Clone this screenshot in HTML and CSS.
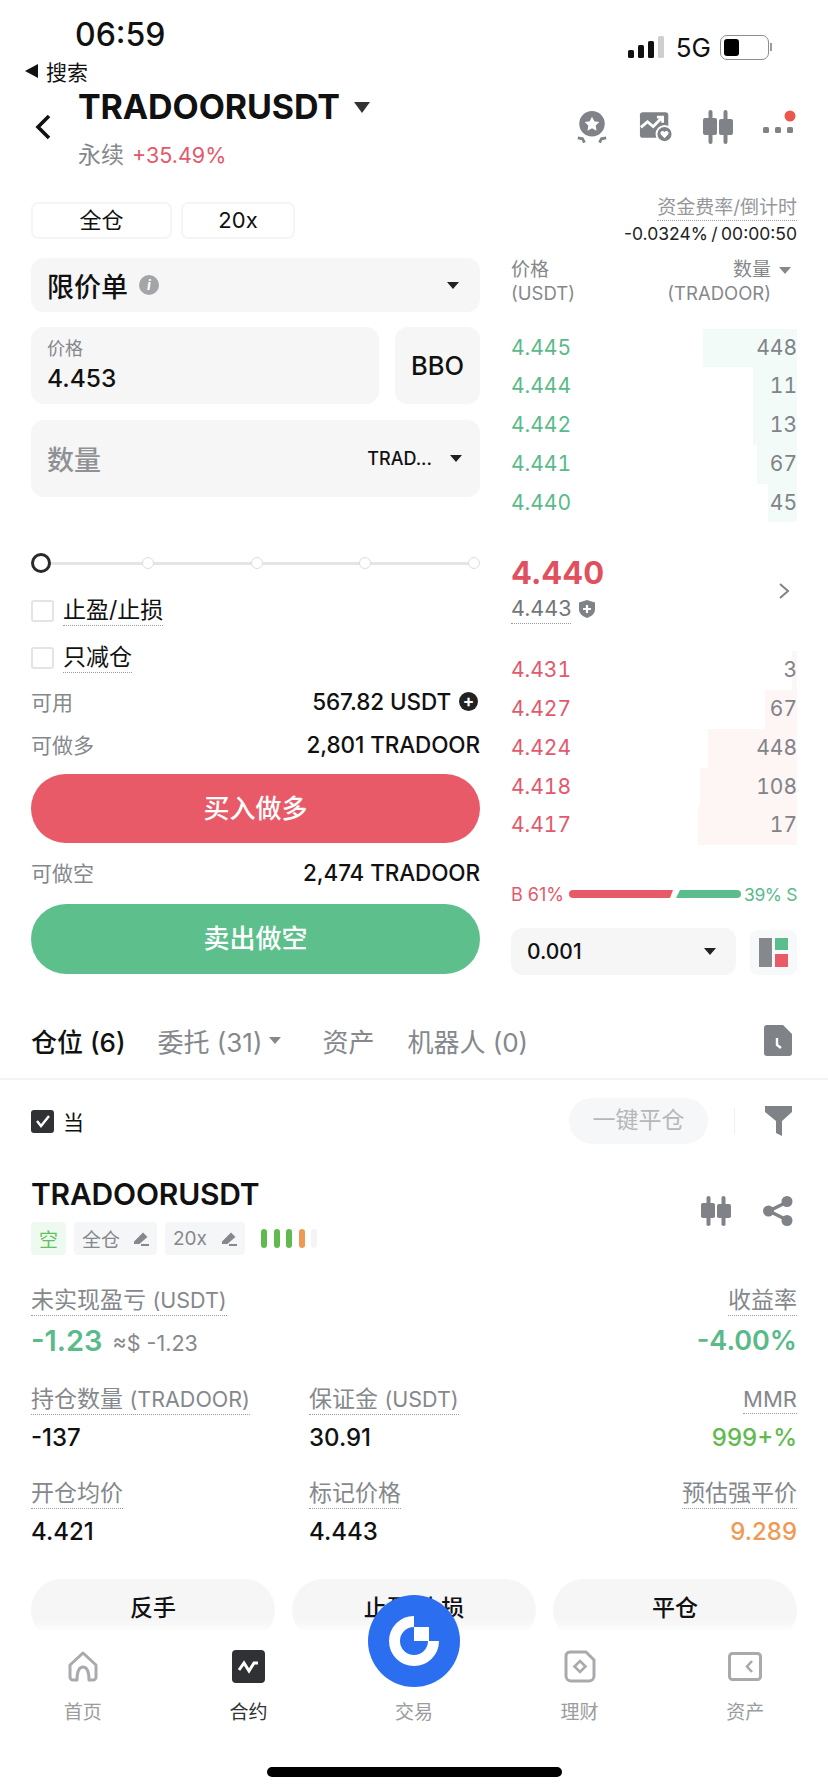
FILE: index.html
```html
<!DOCTYPE html>
<html lang="zh-CN">
<head>
  <meta charset="UTF-8" />
  <title>TRADOORUSDT 永续</title>
  <link rel="stylesheet" href="styles.css">
</head>
<body>
<div class="page">

  <div class="status">
    <div class="time">06:59</div>
    <div class="status-right">
      <svg class="signal" width="37" height="23" viewBox="0 0 37 23">
        <rect x="0" y="14" width="6" height="8" rx="1.5" fill="#111"/>
        <rect x="10" y="9" width="6" height="13" rx="1.5" fill="#111"/>
        <rect x="20" y="5" width="6" height="17" rx="1.5" fill="#111"/>
        <rect x="30" y="0" width="6" height="22" rx="1.5" fill="#cfcfcf"/>
      </svg>
      <span class="net">5G</span>
      <span class="battery"><span class="battery-fill"></span></span>
      <span class="battery-tip"></span>
    </div>
  </div>
  <div class="back-app"><span class="back-tri"></span>搜索</div>

  <div class="header">
    <svg class="back" width="20" height="28" viewBox="0 0 20 28"><path d="M16 3 L5 14 L16 25" fill="none" stroke="#111" stroke-width="3.6"/></svg>
    <div class="title-block">
      <div class="title">TRADOORUSDT<span class="title-arrow"></span></div>
      <div class="subtitle">永续<span class="change">+35.49%</span></div>
    </div>
    <div class="header-icons">
      <svg width="34" height="35" viewBox="0 0 36 36">
        <circle cx="18" cy="14" r="13.5" fill="#7f8286"/>
        <path d="M18 6.500l2.400 4.900 5.400.8-3.900 3.800.9 5.400-4.800-2.500-4.800 2.500.9-5.400-3.900-3.800 5.400-.8z" fill="#fff"/>
        <path d="M3 29l5 1 2 4M33 29l-5 1-2 4" fill="none" stroke="#7f8286" stroke-width="3"/>
      </svg>
      <svg width="34" height="33" viewBox="0 0 36 34">
        <rect x="1" y="2" width="30" height="27" rx="3" fill="#7f8286"/>
        <path d="M2 18l7-6 6 5 9-9M19 7h6v6" fill="none" stroke="#fff" stroke-width="3"/>
        <circle cx="27" cy="25" r="8.500" fill="#7f8286" stroke="#fff" stroke-width="2"/>
        <path d="M27 29.500l-4-4.200a2.300 2.300 0 0 1 4-2.300 2.300 2.300 0 0 1 4 2.300z" fill="#fff"/>
      </svg>
      <svg width="30" height="34" viewBox="0 0 30 34">
        <use href="#candles"/>
      </svg>
      <svg width="34" height="34" viewBox="0 0 34 34">
        <rect x="0" y="17" width="6" height="6" rx="1.500" fill="#7f8286"/>
        <rect x="12" y="17" width="6" height="6" rx="1.500" fill="#7f8286"/>
        <rect x="24" y="17" width="6" height="6" rx="1.500" fill="#7f8286"/>
        <circle cx="27" cy="6" r="5.500" fill="#e8584d"/>
      </svg>
    </div>
  </div>

  <svg class="defs" width="0" height="0">
    <symbol id="candles" viewBox="0 0 30 34">
      <rect x="5.500" y="0" width="4" height="34" rx="2" fill="#7f8286"/>
      <rect x="0" y="8" width="14" height="17" rx="2" fill="#7f8286"/>
      <rect x="20.500" y="0" width="4" height="34" rx="2" fill="#7f8286"/>
      <rect x="16" y="9" width="14" height="16" rx="2" fill="#7f8286"/>
    </symbol>
    <symbol id="pencil" viewBox="0 0 16 14">
      <path d="M2 10L10 2l3 3-7 6H2z" fill="#85888c" stroke="#85888c" stroke-width="2"/>
      <path d="M8 13h8" stroke="#85888c" stroke-width="2"/>
    </symbol>
  </svg>

  <div class="margin-row">
    <div class="margin-btns">
      <div class="margin-btn cross">全仓</div>
      <div class="margin-btn lever">20x</div>
    </div>
    <div class="funding">
      <div><span class="dotted">资金费率/倒计时</span></div>
      <div class="funding-val">-0.0324% / 00:00:50</div>
    </div>
  </div>

  <div class="trade">
    <div class="form">
      <div class="select-type">
        <span class="select-name">限价单</span>
        <span class="info">i</span>
        <span class="caret caret-end"></span>
      </div>
      <div class="price-row">
        <div class="price-field">
          <div class="field-label">价格</div>
          <div class="field-value">4.453</div>
        </div>
        <div class="bbo">BBO</div>
      </div>
      <div class="qty-field">
        <span class="qty-label">数量</span>
        <span class="qty-unit">TRAD...</span>
        <span class="caret"></span>
      </div>
      <div class="slider">
        <span class="knob"></span>
        <span class="dot"></span>
        <span class="dot"></span>
        <span class="dot"></span>
        <span class="dot"></span>
      </div>
      <div class="check-row first"><span class="box"></span><span class="dotted">止盈/止损</span></div>
      <div class="check-row second"><span class="box"></span><span class="dotted">只减仓</span></div>
      <div class="kv avail">
        <span class="kv-key">可用</span>
        <span class="kv-val">567.82 USDT<span class="plus">+</span></span>
      </div>
      <div class="kv long-max">
        <span class="kv-key">可做多</span>
        <span class="kv-val">2,801 TRADOOR</span>
      </div>
      <div class="action buy">买入做多</div>
      <div class="kv short-max">
        <span class="kv-key">可做空</span>
        <span class="kv-val">2,474 TRADOOR</span>
      </div>
      <div class="action sell">卖出做空</div>
    </div>

    <div class="book">
      <div class="book-head">
        <div>
          <div class="head-top">价格</div>
          <div class="head-sub">(USDT)</div>
        </div>
        <div class="head-right">
          <div class="head-top">数量</div>
          <div class="head-sub">(TRADOOR)</div>
          <span class="head-caret"></span>
        </div>
      </div>
      <div class="levels">
        <div class="level up"><span class="depth" style="width:94px"></span><span>4.445</span><span class="qty">448</span></div>
        <div class="level up"><span class="depth" style="width:44px"></span><span>4.444</span><span class="qty">11</span></div>
        <div class="level up"><span class="depth" style="width:44px"></span><span>4.442</span><span class="qty">13</span></div>
        <div class="level up"><span class="depth" style="width:40px"></span><span>4.441</span><span class="qty">67</span></div>
        <div class="level up"><span class="depth" style="width:29px"></span><span>4.440</span><span class="qty">45</span></div>
      </div>
      <div class="mid">
        <div>
          <div class="mid-price">4.440</div>
          <div class="mark-row">
            <span class="mark dotted">4.443</span>
            <svg width="18" height="20" viewBox="0 0 18 20">
              <path d="M9 1l8 2.500v7c0 4-3.500 7-8 8.500-4.500-1.500-8-4.500-8-8.500v-7z" fill="#7f8286"/>
              <path d="M9 6v8M5 10h8" stroke="#fff" stroke-width="2.200"/>
            </svg>
          </div>
        </div>
        <svg class="mid-chev" width="12" height="18" viewBox="0 0 12 18"><path d="M2 2l8 7-8 7" fill="none" stroke="#7f8286" stroke-width="2"/></svg>
      </div>
      <div class="levels">
        <div class="level down"><span class="depth" style="width:5px"></span><span>4.431</span><span class="qty">3</span></div>
        <div class="level down"><span class="depth" style="width:32px"></span><span>4.427</span><span class="qty">67</span></div>
        <div class="level down"><span class="depth" style="width:89px"></span><span>4.424</span><span class="qty">448</span></div>
        <div class="level down"><span class="depth" style="width:97px"></span><span>4.418</span><span class="qty">108</span></div>
        <div class="level down"><span class="depth" style="width:99px"></span><span>4.417</span><span class="qty">17</span></div>
      </div>
      <div class="ratio">
        <span class="ratio-b">B 61%</span>
        <svg width="172" height="8" viewBox="0 0 172 8">
          <path d="M4 0H104L101 8H4a4 4 0 0 1 0-8z" fill="#e85a67"/>
          <path d="M111 0H168a4 4 0 0 1 0 8H107z" fill="#5bbd8d"/>
        </svg>
        <span class="ratio-s">39% S</span>
      </div>
      <div class="book-foot">
        <div class="tick"><span>0.001</span><span class="caret"></span></div>
        <div class="layout-btn">
          <svg width="30" height="30" viewBox="0 0 30 30">
            <rect x="0" y="0" width="13" height="29" fill="#85888c"/>
            <rect x="16" y="0" width="13" height="12" fill="#5bbd8d"/>
            <rect x="16" y="16" width="13" height="13" fill="#e85a67"/>
          </svg>
        </div>
      </div>
    </div>
  </div>

  <div class="tabs">
    <span class="tab active">仓位 (6)</span>
    <span class="tab orders">委托 (31)<span class="tab-caret"></span></span>
    <span class="tab assets">资产</span>
    <span class="tab bots">机器人 (0)</span>
    <svg class="tab-file" width="28" height="31" viewBox="0 0 28 31">
      <path d="M3 0H19L28 9V28a3 3 0 0 1-3 3H3a3 3 0 0 1-3-3V3a3 3 0 0 1 3-3z" fill="#7f8286"/>
      <path d="M13 13v7l4 3" fill="none" stroke="#fff" stroke-width="2.400"/>
    </svg>
  </div>

  <div class="filter-row">
    <span class="box-checked">
      <svg width="16" height="14" viewBox="0 0 16 14"><path d="M2 7l4 5 8-10" fill="none" stroke="#fff" stroke-width="2.400"/></svg>
    </span>
    <span class="filter-name">当</span>
    <span class="close-all">一键平仓</span>
    <span class="filter-sep"></span>
    <svg class="filter-icon" width="27" height="30" viewBox="0 0 27 30">
      <path d="M0 0H27V6L17 15V30L11 27V15L0 6z" fill="#7f8286"/>
    </svg>
  </div>

  <div class="pos-head">
    <div>
      <div class="pos-title">TRADOORUSDT</div>
      <div class="tags">
        <span class="tag short">空</span>
        <span class="tag tag-cross">全仓<svg width="16" height="14"><use href="#pencil"/></svg></span>
        <span class="tag tag-lever">20x<svg width="16" height="14"><use href="#pencil"/></svg></span>
        <span class="risk">
          <i class="g"></i><i class="g"></i><i class="g"></i><i class="o"></i><i class="e"></i>
        </span>
      </div>
    </div>
    <div class="pos-icons">
      <svg width="30" height="30" viewBox="0 0 30 34" preserveAspectRatio="none"><use href="#candles"/></svg>
      <svg width="30" height="30" viewBox="0 0 30 30">
        <path d="M24 6L6 15l18 9" fill="none" stroke="#7f8286" stroke-width="3.400"/>
        <circle cx="24" cy="5.500" r="5.500" fill="#7f8286"/>
        <circle cx="5.500" cy="15" r="5.500" fill="#7f8286"/>
        <circle cx="24" cy="24.500" r="5.500" fill="#7f8286"/>
      </svg>
    </div>
  </div>

  <div class="pnl">
    <div>
      <div class="stat-label"><span class="dotted">未实现盈亏 <span class="unit">(USDT)</span></span></div>
      <div class="pnl-val"><b>-1.23</b><span class="approx">≈$ -1.23</span></div>
    </div>
    <div class="right">
      <div class="stat-label"><span class="dotted">收益率</span></div>
      <div class="pnl-val"><b class="roe">-4.00%</b></div>
    </div>
  </div>
  <div class="stats">
    <div>
      <div class="stat-label"><span class="dotted">持仓数量 <span class="unit">(TRADOOR)</span></span></div>
      <div class="stat-val">-137</div>
    </div>
    <div>
      <div class="stat-label"><span class="dotted">保证金 <span class="unit">(USDT)</span></span></div>
      <div class="stat-val">30.91</div>
    </div>
    <div class="right">
      <div class="stat-label"><span class="dotted mmr-label">MMR</span></div>
      <div class="stat-val mmr">999+%</div>
    </div>
    <div>
      <div class="stat-label"><span class="dotted">开仓均价</span></div>
      <div class="stat-val">4.421</div>
    </div>
    <div>
      <div class="stat-label"><span class="dotted">标记价格</span></div>
      <div class="stat-val">4.443</div>
    </div>
    <div class="right">
      <div class="stat-label"><span class="dotted">预估强平价</span></div>
      <div class="stat-val liq">9.289</div>
    </div>
  </div>
  <div class="pos-actions">
    <div class="pos-btn">反手</div>
    <div class="pos-btn">止盈/止损</div>
    <div class="pos-btn">平仓</div>
  </div>

  <nav class="tabbar">
    <div class="nav-item">
      <svg width="32" height="31" viewBox="0 0 32 31">
        <path d="M16 2L29 14V26a3 3 0 0 1-3 3H22C22 22 21 16 16 16S10 22 10 29H6a3 3 0 0 1-3-3V14z" fill="none" stroke="#a8aaad" stroke-width="3" stroke-linejoin="round"/>
      </svg>
      <span>首页</span>
    </div>
    <div class="nav-item active">
      <svg width="33" height="33" viewBox="0 0 33 33">
        <rect width="33" height="33" rx="4" fill="#2f3134"/>
        <path d="M7 20L12 13L17 21L22 13H26" fill="none" stroke="#fff" stroke-width="3"/>
      </svg>
      <span>合约</span>
    </div>
    <div class="nav-item">
      <svg width="34" height="33" viewBox="0 0 34 33"></svg>
      <span>交易</span>
    </div>
    <div class="nav-item">
      <svg width="32" height="33" viewBox="0 0 32 33">
        <path d="M6 2H22L30 10V26a5 5 0 0 1-5 5H7a5 5 0 0 1-5-5V6a4 4 0 0 1 4-4z" fill="none" stroke="#a8aaad" stroke-width="3" stroke-linejoin="round"/>
        <path d="M16 11l5.500 5.500L16 22l-5.500-5.500z" fill="none" stroke="#a8aaad" stroke-width="2.600"/>
      </svg>
      <span>理财</span>
    </div>
    <div class="nav-item">
      <svg width="34" height="29" viewBox="0 0 34 29">
        <rect x="1.500" y="1.500" width="31" height="26" rx="3" fill="none" stroke="#a8aaad" stroke-width="3"/>
        <path d="M24 9l-5 5.500 5 5.500" fill="none" stroke="#a8aaad" stroke-width="2.600"/>
      </svg>
      <span>资产</span>
    </div>
  </nav>

  <div class="fab">
    <svg width="92" height="92" viewBox="0 0 92 92">
      <path d="M46 26.500A19.500 19.500 0 1 0 65.500 46" fill="none" stroke="#fff" stroke-width="11"/>
      <rect x="46" y="32" width="15" height="14" fill="#fff"/>
    </svg>
  </div>
  <div class="home-bar"></div>
</div>
</body>
</html>
```

FILE: styles.css
```css
* {
  box-sizing: border-box;
}

body {
  margin: 0;
  background: #fff;
  color: #111;
  font-family: Inter, "Noto Sans CJK SC", sans-serif;
}

.page {
  position: relative;
  width: 828px;
  height: 1792px;
  overflow: hidden;
  padding: 0 31px;
}

.defs {
  position: absolute;
}

.dotted {
  border-bottom: 1.5px dotted #9a9c9f;
  padding-bottom: 1px;
}

.right {
  text-align: right;
}

/* status bar */
.status {
  display: flex;
  justify-content: space-between;
  height: 59px;
  padding: 15px 25px 0 44px;
}

.time {
  font-size: 32px;
  line-height: 40px;
  font-weight: 500;
}

.status-right {
  display: flex;
  align-items: center;
  height: 46px;
  margin-top: 9px;
}

.net {
  margin: 0 9px 0 11px;
  font-size: 26px;
  font-weight: 400;
}

.battery {
  width: 49px;
  height: 25px;
  border: 1.5px solid #8d8d8d;
  border-radius: 7px;
  padding: 3px;
}

.battery-fill {
  display: block;
  width: 15px;
  height: 100%;
  background: #000;
  border-radius: 3px;
}

.battery-tip {
  width: 2px;
  height: 8px;
  margin-left: 1px;
  background: #9a9a9a;
}

.back-app {
  display: flex;
  align-items: center;
  height: 24px;
  margin-left: -6px;
  font-size: 21px;
}

.back-tri {
  width: 0;
  height: 0;
  margin-right: 8px;
  border-top: 7px solid transparent;
  border-bottom: 7px solid transparent;
  border-right: 13px solid #111;
}

/* header */
.header {
  display: flex;
  height: 119px;
  padding-top: 4px;
}

.back {
  margin: 26px 0 0 2px;
}

.title-block {
  margin-left: 25px;
}

.title {
  display: flex;
  align-items: center;
  height: 40px;
  font-size: 34px;
  line-height: 40px;
  font-weight: 700;
  letter-spacing: -0.1px;
}

.title-arrow {
  width: 0;
  height: 0;
  margin-left: 14px;
  border-left: 8px solid transparent;
  border-right: 8px solid transparent;
  border-top: 11px solid #333;
}

.subtitle {
  margin-top: 11px;
  font-size: 23px;
  line-height: 34px;
  color: #85888c;
}

.change {
  margin-left: 8px;
  font-size: 21.500px;
  color: #e2596c;
}

.header-icons {
  display: flex;
  align-items: flex-start;
  gap: 30px;
  margin: 23px 0 0 auto;
}

/* margin row */
.margin-row {
  display: flex;
  justify-content: space-between;
  align-items: center;
  height: 37px;
  margin-bottom: 19px;
}

.margin-btns {
  display: flex;
  gap: 9px;
}

.margin-btn {
  height: 37px;
  border: 2px solid #f5f5f6;
  border-radius: 7px;
  font-size: 22px;
  line-height: 33px;
  text-align: center;
}

.cross {
  width: 141px;
}

.lever {
  width: 114px;
}

.funding {
  text-align: right;
  font-size: 19px;
  line-height: 26px;
  color: #95979a;
}

.funding-val {
  font-size: 17.500px;
  word-spacing: -1.500px;
  color: #222;
}

/* trade panel */
.trade {
  display: grid;
  grid-template-columns: 449px 286px;
  column-gap: 31px;
  height: 715px;
}

.select-type,
.price-field,
.bbo,
.qty-field {
  background: #f6f6f7;
  border-radius: 13px;
}

.select-type {
  display: flex;
  align-items: center;
  height: 54px;
  padding: 0 21px 0 16px;
}

.select-name {
  font-size: 27px;
  font-weight: 500;
}

.info {
  width: 20px;
  height: 20px;
  margin-left: 11px;
  border-radius: 50%;
  background: #a3a5a8;
  color: #fff;
  font-size: 14px;
  font-style: italic;
  font-weight: 700;
  line-height: 20px;
  text-align: center;
}

.caret {
  width: 0;
  height: 0;
  border-left: 6px solid transparent;
  border-right: 6px solid transparent;
  border-top: 7px solid #222;
}

.caret-end {
  margin-left: auto;
}

.price-row {
  display: flex;
  gap: 16px;
  margin-top: 15px;
}

.price-field {
  width: 348px;
  height: 77px;
  padding: 8px 16px;
}

.field-label {
  font-size: 18px;
  line-height: 28px;
  color: #85888c;
}

.field-value {
  font-size: 24.500px;
  line-height: 30px;
  font-weight: 500;
}

.bbo {
  flex: 1;
  font-size: 25.500px;
  font-weight: 500;
  line-height: 77px;
  text-align: center;
}

.qty-field {
  display: flex;
  align-items: center;
  height: 77px;
  margin-top: 16px;
  padding: 0 18px 0 16px;
}

.qty-label {
  margin-right: auto;
  font-size: 27px;
  font-weight: 500;
  color: #8f9194;
}

.qty-unit {
  margin-right: 18px;
  font-size: 18px;
  font-weight: 500;
}

.slider {
  position: relative;
  display: flex;
  justify-content: space-between;
  align-items: center;
  height: 20px;
  margin-top: 56px;
}

.slider::before {
  content: "";
  position: absolute;
  left: 5px;
  right: 5px;
  top: 8.500px;
  height: 3px;
  background: #e4e5e6;
}

.knob,
.dot {
  position: relative;
  border-radius: 50%;
  background: #fff;
}

.knob {
  width: 20px;
  height: 20px;
  margin-right: -6px;
  border: 3px solid #2a2a2a;
}

.dot {
  width: 12px;
  height: 12px;
  border: 1.500px solid #dcdddf;
}

.check-row {
  display: flex;
  align-items: center;
  gap: 9px;
  height: 30px;
  font-size: 23px;
  line-height: 28px;
}

.check-row.first {
  margin-top: 23px;
}

.check-row.second {
  margin-top: 17px;
}

.box {
  width: 23px;
  height: 22px;
  border: 2px solid #e3e4e5;
  border-radius: 3px;
}

.kv {
  display: flex;
  justify-content: space-between;
  align-items: center;
  height: 28px;
  margin-top: 14px;
}

.kv.long-max,
.kv.short-max {
  margin-top: 15px;
}

.kv-key {
  font-size: 21px;
  color: #85888c;
}

.kv-val {
  display: flex;
  align-items: center;
  font-size: 22.500px;
  font-weight: 500;
  letter-spacing: -0.1px;
}

.plus {
  width: 19px;
  height: 19px;
  margin: 0 2px 0 8px;
  border-radius: 50%;
  background: #222;
  color: #fff;
  font-size: 17px;
  font-weight: 700;
  line-height: 18px;
  text-align: center;
}

.action {
  height: 69px;
  margin-top: 16px;
  border-radius: 35px;
  color: #fff;
  font-size: 26px;
  font-weight: 500;
  line-height: 69px;
  text-align: center;
}

.buy {
  background: #e85a67;
}

.sell {
  height: 70px;
  margin-top: 18px;
  background: #5cbf8c;
  line-height: 70px;
}

/* order book */
.book-head {
  display: flex;
  justify-content: space-between;
  height: 70.500px;
}

.head-top {
  font-size: 19px;
  line-height: 24px;
  color: #85888c;
}

.head-sub {
  font-size: 18.500px;
  line-height: 22px;
  color: #85888c;
}

.head-right {
  position: relative;
  padding-right: 26px;
  text-align: right;
}

.head-caret {
  position: absolute;
  top: 9px;
  right: 6px;
  width: 0;
  height: 0;
  border-left: 6px solid transparent;
  border-right: 6px solid transparent;
  border-top: 7px solid #85888c;
}

.level {
  position: relative;
  display: flex;
  justify-content: space-between;
  height: 38.750px;
  font-size: 21px;
  font-variant-numeric: tabular-nums;
  line-height: 38.750px;
}

.level span:not(.depth) {
  position: relative;
}

.depth {
  position: absolute;
  top: 0;
  right: 0;
  bottom: 0;
}

.up {
  color: #5aba8a;
}

.up .depth {
  background: #f3fbf8;
}

.down {
  color: #e2596c;
}

.down .depth {
  background: #fef5f5;
}

.level .qty {
  color: #808387;
}

.mid {
  display: flex;
  justify-content: space-between;
  align-items: center;
  height: 129px;
  padding: 5px 7px 0 0;
}

.mid-chev {
  margin-top: 4px;
}

.mid-price {
  font-size: 31px;
  font-weight: 700;
  line-height: 40px;
  color: #e0505f;
}

.mark-row {
  display: flex;
  align-items: center;
  gap: 7px;
  height: 32px;
}

.mark {
  font-size: 21.500px;
  line-height: 27px;
  color: #73767a;
}

.ratio {
  display: flex;
  justify-content: space-between;
  align-items: center;
  height: 24px;
  margin-top: 37px;
  font-size: 18px;
}

.ratio-b {
  width: 55px;
  color: #e2596c;
}

.ratio-s {
  width: 54px;
  color: #5aba8a;
  font-size: 17.500px;
  letter-spacing: -0.4px;
  text-align: right;
  white-space: nowrap;
}

.book-foot {
  display: flex;
  justify-content: space-between;
  margin-top: 22px;
}

.tick {
  display: flex;
  justify-content: space-between;
  align-items: center;
  width: 225px;
  height: 47px;
  padding: 0 20px 0 16px;
  background: #f6f6f7;
  border-radius: 12px;
  font-size: 21px;
  font-weight: 500;
}

.layout-btn {
  display: flex;
  justify-content: center;
  align-items: center;
  width: 47px;
  height: 45px;
  margin-top: 2px;
  background: #f7f8f9;
  border-radius: 8px;
}

/* position tabs */
.tabs {
  display: flex;
  align-items: center;
  height: 75px;
  margin: 32px -31px 0;
  padding: 0 36px 2px 31px;
  border-bottom: 2px solid #f3f4f5;
  font-size: 26px;
  color: #85888c;
}

.tab.active {
  color: #111;
  font-weight: 500;
}

.orders {
  display: flex;
  align-items: center;
  margin-left: 32px;
}

.tab-caret {
  width: 0;
  height: 0;
  margin-left: 7px;
  border-left: 6px solid transparent;
  border-right: 6px solid transparent;
  border-top: 7px solid #85888c;
}

.assets {
  margin-left: 41px;
}

.bots {
  margin-left: 33px;
}

.tab-file {
  margin-left: auto;
}

.filter-row {
  display: flex;
  align-items: center;
  height: 46px;
  margin-top: 18px;
}

.box-checked {
  display: flex;
  justify-content: center;
  align-items: center;
  width: 23px;
  height: 23px;
  background: #2f3134;
  border-radius: 3px;
}

.filter-name {
  margin-left: 9px;
  font-size: 21px;
}

.close-all {
  width: 139px;
  height: 46px;
  margin-left: auto;
  background: #f6f7f8;
  border-radius: 23px;
  color: #b5b7ba;
  font-size: 23px;
  line-height: 44px;
  text-align: center;
}

.filter-sep {
  width: 1px;
  height: 26px;
  margin: 0 30px 0 26px;
  background: #eeeff0;
}

.filter-icon {
  margin-right: 5px;
}

/* position card */
.pos-head {
  display: flex;
  justify-content: space-between;
  align-items: center;
  margin-top: 32px;
}

.pos-title {
  font-size: 30px;
  font-weight: 600;
  line-height: 36px;
  letter-spacing: -0.2px;
}

.tags {
  display: flex;
  align-items: center;
  gap: 8px;
  height: 33px;
  margin-top: 10px;
}

.tag {
  display: flex;
  justify-content: space-between;
  align-items: center;
  height: 33px;
  padding: 0 8px;
  background: #f5f6f7;
  border-radius: 4px;
  color: #85888c;
  font-size: 19px;
}

.tag.short {
  width: 35px;
  background: #eefaf0;
  color: #62c25a;
}

.tag-cross {
  width: 83px;
}

.tag-lever {
  width: 80px;
}

.risk {
  display: flex;
  gap: 6.500px;
  margin-left: 8px;
}

.risk i {
  width: 6px;
  height: 19px;
  border-radius: 3px;
}

.risk .g {
  background: #62b94f;
}

.risk .o {
  background: #ee9a55;
}

.risk .e {
  background: #f3f4f5;
}

.pos-icons {
  display: flex;
  gap: 32px;
  margin: 0 4px 10px 0;
}

.pnl {
  display: flex;
  justify-content: space-between;
  margin-top: 31px;
}

.stat-label {
  height: 28px;
  font-size: 23px;
  line-height: 28px;
  color: #85888c;
}

.unit {
  font-size: 21.500px;
}

.mmr-label {
  font-size: 22px;
}

.pnl-val {
  height: 40px;
  margin-top: 7px;
  line-height: 40px;
}

.pnl-val b {
  font-size: 29px;
  font-weight: 600;
  color: #5aba8a;
}

.pnl-val b.roe {
  font-size: 27px;
}

.approx {
  margin-left: 10px;
  font-size: 21.500px;
  color: #85888c;
}

.stats {
  display: grid;
  grid-template-columns: 278px 1fr auto;
  margin-top: 24px;
}

.stats > div:nth-child(n+4) {
  margin-top: 21px;
}

.stat-val {
  height: 40px;
  margin-top: 5px;
  font-size: 24px;
  font-weight: 500;
  line-height: 40px;
}

.mmr {
  color: #62b94f;
}

.liq {
  color: #ee9a55;
}

.pos-actions {
  display: grid;
  grid-template-columns: repeat(3, 1fr);
  column-gap: 17px;
  margin-top: 27px;
}

.pos-btn {
  height: 62px;
  background: #f6f6f7;
  border-radius: 31px;
  font-size: 23px;
  font-weight: 500;
  line-height: 58px;
  text-align: center;
}

/* bottom nav */
.tabbar {
  position: absolute;
  left: 0;
  right: 0;
  bottom: 0;
  display: grid;
  grid-template-columns: repeat(5, 165.600px);
  height: 162px;
  padding-top: 20px;
  background: #fff;
  box-shadow: 0 -4px 8px rgba(255, 255, 255, 0.8);
}

.nav-item {
  display: flex;
  flex-direction: column;
  align-items: center;
  color: #9a9c9f;
  font-size: 19px;
}

.nav-item svg {
  height: 33px;
}

.nav-item span {
  margin-top: 16px;
  line-height: 28px;
}

.nav-item.active {
  color: #2f3134;
}

.fab {
  position: absolute;
  left: 368px;
  top: 1595px;
  width: 92px;
  height: 92px;
  border-radius: 50%;
  background: #2b6ff0;
}

.home-bar {
  position: absolute;
  left: 267px;
  top: 1767px;
  width: 295px;
  height: 10px;
  border-radius: 5px;
  background: #000;
}
```
